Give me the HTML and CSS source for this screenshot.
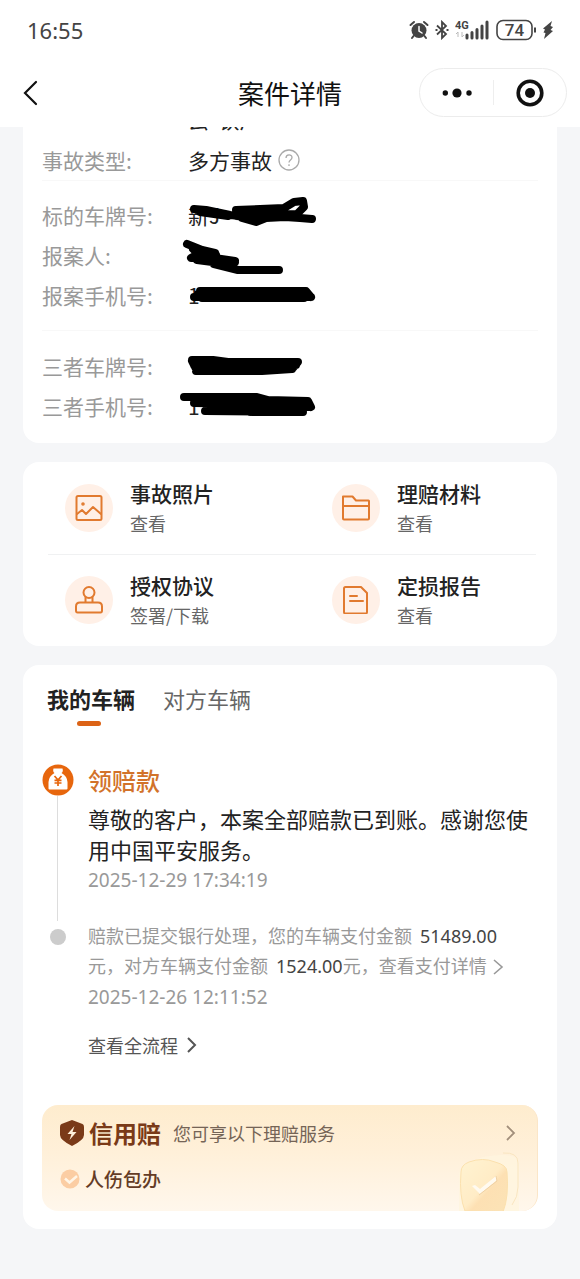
FILE: index.html
```html
<!DOCTYPE html>
<html lang="zh-CN">
<head>
<meta charset="utf-8">
<meta name="viewport" content="width=device-width, initial-scale=1">
<title>案件详情</title>
<link rel="stylesheet" href="styles.css">
</head>
<body>
<header class="header">
  <div class="status">
    <time class="clock">16:55</time>
    <div class="status-icons">
      <svg width="20" height="20" viewBox="0 0 20 20" fill="none" stroke="#444" stroke-width="2" stroke-linecap="round"><circle cx="10" cy="10.500" r="7.500" fill="#444" stroke="none"/><path d="M1.500 5 5 2M18.500 5 15 2M4.500 16 3 18M15.500 16 17 18"/><path d="M10 6.500v4.500l3 2" stroke="#fff" stroke-width="1.500"/></svg>
      <svg width="14" height="20" viewBox="0 0 14 20" fill="none" stroke="#444" stroke-width="1.800"><path d="M2 5.500 11 14 7 18V2l4 4-9 8.500"/><path d="M.500 10h2M11.500 10h2"/></svg>
      <svg class="signal" width="35" height="20" viewBox="0 0 35 20"><text x="0" y="9" class="signal-text">4G</text><path d="M3 12v5M1 14l2-2M7 12v5l2-2" stroke="#bbb" fill="none"/><path d="M12 15v3M17 12.500V18M22 9.500V18M27 6V18M32 2V18" stroke="#444" stroke-width="3" stroke-linecap="round"/></svg>
      <svg width="41" height="22" viewBox="0 0 41 22"><rect x="1" y="1.500" width="35" height="19" rx="6" fill="none" stroke="#444" stroke-width="1.600"/><path d="M39 8.500v5" stroke="#444" stroke-width="2"/><text x="18.500" y="17" text-anchor="middle" class="battery-text">74</text></svg>
      <svg width="10" height="20" viewBox="0 0 10 20" fill="#444"><path d="M9 1 0 8.500l2 1-1.500 3 2 .500L1 19l9-8-2.500-1L10 7 7.500 6z"/></svg>
    </div>
  </div>
  <div class="nav">
    <button class="icon-btn back" aria-label="返回"><svg width="16" height="26" viewBox="0 0 16 26" fill="none" stroke="#111" stroke-width="2.200" stroke-linecap="round"><path d="M14 2 3 13l11 11"/></svg></button>
    <h1 class="title">案件详情</h1>
    <div class="capsule">
      <button class="icon-btn" aria-label="更多"><svg width="30" height="12" viewBox="0 0 30 12" fill="#111"><circle cx="3.300" cy="6" r="2.700"/><circle cx="15" cy="6" r="4.600"/><circle cx="27" cy="6" r="2.700"/></svg></button>
      <button class="icon-btn" aria-label="关闭"><svg width="28" height="28" viewBox="0 0 28 28"><circle cx="14" cy="14" r="11.800" fill="none" stroke="#111" stroke-width="3.600"/><circle cx="14" cy="14" r="5" fill="#111"/></svg></button>
    </div>
  </div>
</header>

<main class="page">
  <section class="card details">
    <div class="cut-row"><span>云&nbsp; 铁厂</span></div>
    <dl class="group">
      <div class="row"><dt>事故类型:</dt><dd>多方事故<svg class="help" width="22" height="22" viewBox="0 0 22 22" fill="none" stroke="#aaa" stroke-width="1.300"><circle cx="11" cy="11" r="10"/><path d="M8 9c0-4 6-4 6-.5 0 2.500-3 2.500-3 5M11 15.300v1.700"/></svg></dd></div>
    </dl>
    <dl class="group">
      <div class="row"><dt>标的车牌号:</dt><dd>新J<svg class="ink" viewBox="180 196 140 40"><path d="M194 210 206 211 230 216 240 217M200 213 228 217M236 211 284 209 294 203 303 202 304 208 297 215 268 216M236 215 262 214 280 212M236 217 252 218 270 216 290 217M242 219 256 223 266 219 285 218 300 219 312 220"/></svg></dd></div>
      <div class="row"><dt>报案人:</dt><dd><svg class="ink" viewBox="180 236 140 40"><path d="M187 245 202 251 215 254M193 250 198 255 191 259 208 258 235 262 220 260M197 261 220 264 235 263M214 265 238 271H279M202 254 216 256 210 260"/></svg></dd></div>
      <div class="row"><dt>报案手机号:</dt><dd>1<svg class="ink" viewBox="180 276 140 40"><path d="M200 292H306L311 298M194 298H311M198 295H306M202 299H304"/></svg></dd></div>
    </dl>
    <dl class="group last">
      <div class="row"><dt>三者车牌号:</dt><dd><svg class="ink" viewBox="180 347 140 40"><path d="M192 361 213 361 228 363 298 363 293 369 196 372M194 366H296M192 362 197 372H262L292 370"/></svg></dd></div>
      <div class="row"><dt>三者手机号:</dt><dd>1<svg class="ink" viewBox="180 387 140 40"><path d="M184 398H257L268 401 308 402 311 408M194 404 308 406M205 412 303 413M198 401 220 403M210 408H309M250 413H294"/></svg></dd></div>
    </dl>
  </section>

  <nav class="card tiles">
    <div class="tile-row">
      <a class="tile" href="#photos"><span class="badge"><svg class="line-icon" viewBox="0 0 28 28"><rect x="1.500" y="2" width="25" height="24" rx="1.500"/><path d="M2 20 7 16 11 20 18 13 26 20"/><circle cx="8" cy="10" r=".800"/></svg></span><span class="tile-text"><b>事故照片</b><small>查看</small></span></a>
      <a class="tile" href="#materials"><span class="badge"><svg class="line-icon" viewBox="0 0 28 28"><path d="M1 2.500h9.500l3.500 4h12.500q.500 0 .500.500v17.500q0 1-1 1H2q-1 0-1-1zM1 12h26"/></svg></span><span class="tile-text"><b>理赔材料</b><small>查看</small></span></a>
    </div>
    <div class="tile-row">
      <a class="tile" href="#agreement"><span class="badge"><svg class="line-icon" viewBox="0 0 28 28"><circle cx="14" cy="6.500" r="5.500"/><path d="M10.500 11.500v5H5q-4 0-4 4v4Q1 26.500 2.500 26.500h23Q27 26.500 27 24.500v-4q0-4-4-4h-5.500v-5M10.500 16.500h7"/></svg></span><span class="tile-text"><b>授权协议</b><small>签署/下载</small></span></a>
      <a class="tile" href="#report"><span class="badge"><svg class="line-icon" viewBox="0 0 28 28"><path d="M3.500 1h15.500l6 6v19q0 1.500-1.500 1.500h-20Q2 27.500 2 26V2.500Q2 1 3.500 1zM8 10h7M8 15h13"/></svg></span><span class="tile-text"><b>定损报告</b><small>查看</small></span></a>
    </div>
  </nav>

  <section class="card progress">
    <div class="tabs" role="tablist">
      <button class="tab active" role="tab" aria-selected="true">我的车辆</button>
      <button class="tab" role="tab" aria-selected="false">对方车辆</button>
    </div>
    <ol class="steps">
      <li class="step">
        <div class="rail"><svg width="32" height="32" viewBox="0 0 32 32"><circle cx="16" cy="16" r="15.500" fill="#e7660d"/><path d="M11.500 4.500q-1 3 1 4.500Q7 12 6.500 18v6.500q0 1 1 1h17q1 0 1-1V18Q25 12 19.500 9q2-1.500 1-4.500z" fill="#fff"/><path d="m12.500 12 3.500 4 3.500-4M12.500 16.300h7M12.500 19h7M16 16v6" fill="none" stroke="#e7660d" stroke-width="1.700"/></svg><span class="line"></span></div>
        <div class="step-body current">
          <h2>领赔款</h2>
          <p class="message">尊敬的客户，本案全部赔款已到账。感谢您使用中国平安服务。</p>
          <time>2025-12-29 17:34:19</time>
        </div>
      </li>
      <li class="step">
        <div class="rail"><span class="dot"></span></div>
        <div class="step-body">
          <p class="past">赔款已提交银行处理，您的车辆支付金额 <strong>51489.00</strong> <br>元，对方车辆支付金额 <strong>1524.00</strong>元，<a href="#payment">查看支付详情<svg width="12" height="16" viewBox="0 0 12 16" fill="none" stroke="#999" stroke-width="1.600"><path d="m2 1 8 7-8 7"/></svg></a></p>
          <time>2025-12-26 12:11:52</time>
          <a class="all" href="#flow">查看全流程<svg width="12" height="16" viewBox="0 0 12 16" fill="none" stroke="#555" stroke-width="2"><path d="m2 1 7 7-7 7"/></svg></a>
        </div>
      </li>
    </ol>
    <a class="banner" href="#credit">
      <svg class="medal" width="82" height="62" viewBox="0 0 82 62" aria-hidden="true">
        <defs><linearGradient id="m" x1="0" y1="0" x2="1" y2="1"><stop offset="0" stop-color="#fff3d2"/><stop offset=".5" stop-color="#ffecc6"/><stop offset=".6" stop-color="#fde0b3"/><stop offset="1" stop-color="#fbe3b6"/></linearGradient></defs>
        <path d="M4 62V24Q6 16 28 8q34-6 36 6v48z" fill="#fff5df" opacity=".8"/>
        <path d="M48 4q15-1 15 10v24q0 10-6 18" fill="none" stroke="#f9e5c0"/>
        <path d="M10 62Q4 47 6 23q0-7 8-10 14-5 26 0 12 3 12 10 2 25-4 40z" fill="url(#m)" stroke="#fbe0ad"/>
        <path d="m17 37 8 8 17-14-1-4-16 13-5-4z" fill="#fffaf0"/><path d="m24 46 18-14-1-5" fill="none" stroke="#efd1a4"/>
      </svg>
      <span class="banner-head">
        <svg width="24" height="26" viewBox="0 0 24 26"><path d="M12 0 22.500 4Q24 4.500 24 7v8q0 5-12 11Q0 20 0 15V7q0-2.500 1.500-3z" fill="#7a3a18"/><path d="m14.500 6-7 8h4l-2 6 7-8h-4z" fill="#fff0da"/></svg>
        <b>信用赔</b><span class="banner-note">您可享以下理赔服务</span>
        <svg class="go" width="12" height="16" viewBox="0 0 12 16" fill="none" stroke="#a28f7b" stroke-width="1.800"><path d="m2 1 7 7-7 7"/></svg>
      </span>
      <span class="benefit"><svg width="20" height="20" viewBox="0 0 20 20"><circle cx="10" cy="10" r="9.500" fill="#fbcda3"/><path d="m5 9.500 4.500 4L17 7" fill="none" stroke="#fff5e6" stroke-width="2.500"/></svg>人伤包办</span>
    </a>
  </section>
</main>
</body>
</html>
```

FILE: styles.css
```css
* { box-sizing: border-box; }
body {
  margin: 0;
  background: #f5f6f8;
  color: #222;
  font-family: "Noto Sans CJK SC", sans-serif;
  font-size: 21px;
}
h1, h2, p, dl, dd, ol { margin: 0; padding: 0; }
ol { list-style: none; }
a { color: inherit; text-decoration: none; }
button { font: inherit; color: inherit; background: none; border: 0; padding: 0; }
svg { display: block; flex: none; }

.header { background: #fff; }
.status {
  height: 60px;
  padding: 0 27px;
  display: flex;
  align-items: center;
  justify-content: space-between;
}
.clock { font: 22px/30px "Noto Sans", sans-serif; color: #444; }
.status-icons { display: flex; align-items: center; gap: 6px; }
.signal-text { font: bold 11px Roboto, sans-serif; fill: #444; }
.battery-text { font: 500 17px Roboto, sans-serif; fill: #444; }
.nav {
  height: 67px;
  padding: 0 13px 2px;
  display: grid;
  grid-template-columns: 1fr auto 1fr;
  align-items: center;
}
.icon-btn { display: flex; align-items: center; justify-content: center; }
.back { justify-self: start; padding: 0 9px; }
.title { font-size: 26px; font-weight: 400; line-height: 36px; color: #111; }
.capsule {
  justify-self: end;
  width: 148px;
  height: 49px;
  border: 1px solid #ececec;
  border-radius: 25px;
  display: grid;
  grid-template-columns: 1fr 1fr;
  align-items: center;
}
.capsule .icon-btn { height: 25px; }
.capsule .icon-btn + .icon-btn { border-left: 1px solid #eee; }

.page { padding: 0 23px 50px; display: grid; gap: 19px; }
.card { background: #fff; border-radius: 16px; min-width: 0; }

.details { padding: 0 19px 17px; border-radius: 0 0 16px 16px; }
.cut-row {
  height: 5px;
  margin-bottom: 8px;
  padding-left: 146px;
  display: flex;
  align-items: flex-end;
  overflow: hidden;
  line-height: 26px;
}
.group { padding-bottom: 15px; margin-bottom: 15px; border-bottom: 1px solid #f8f8f8; }
.group:first-of-type { padding-bottom: 0; margin-bottom: 14px; }
.group.last { border: 0; margin: 0; padding: 0; }
.row { display: flex; align-items: center; height: 40px; line-height: 30px; }
.row dt { width: 146px; color: #999; }
.row dd { position: relative; display: flex; align-items: center; height: 40px; color: #222; }
.help { margin-left: 6px; }
.ink {
  position: absolute;
  left: -8px;
  top: 0;
  width: 140px;
  height: 40px;
  overflow: visible;
  fill: none;
  stroke: #000;
  stroke-width: 8;
  stroke-linecap: round;
  stroke-linejoin: round;
}

.tile-row { display: grid; grid-template-columns: 1fr 1fr; position: relative; }
.tile-row + .tile-row::before {
  content: "";
  position: absolute;
  left: 25px;
  right: 21px;
  top: 0;
  border-top: 1px solid #f0f1f2;
}
.tile { height: 92px; padding-left: 42px; display: flex; align-items: center; gap: 17px; }
.badge {
  width: 48px;
  height: 48px;
  border-radius: 50%;
  background: #fff0e7;
  display: flex;
  align-items: center;
  justify-content: center;
}
.line-icon {
  width: 28px;
  height: 28px;
  fill: none;
  stroke: #e17a2f;
  stroke-width: 2;
  stroke-linejoin: round;
  stroke-linecap: round;
}
.tile-text { display: grid; padding-bottom: 3px; }
.tile-text b { font-weight: 500; line-height: 32px; }
.tile-text small { font-size: 18px; line-height: 28px; color: #666; }

.progress { padding: 15px 19px 18px; }
.tabs { display: flex; gap: 28px; padding-left: 5px; }
.tab { position: relative; height: 46px; padding-bottom: 10px; font-size: 22px; line-height: 36px; color: #666; }
.tab.active { font-weight: 700; color: #222; }
.tab.active::after {
  content: "";
  position: absolute;
  left: 50%;
  bottom: 0;
  width: 24px;
  height: 5px;
  margin-left: -14px;
  border-radius: 3px;
  background: #dc6316;
}
.steps { padding-top: 38px; }
.step { display: flex; gap: 15px; }
.rail { width: 31px; display: flex; flex-direction: column; align-items: center; }
.line { flex: 1; width: 1px; background: #ddd; }
.dot { width: 16px; height: 16px; margin-top: 8px; border-radius: 50%; background: #ccc; }
.step-body { flex: 1; min-width: 0; }
.current { padding-bottom: 29px; }
.step h2 { font-size: 24px; font-weight: 500; line-height: 32px; color: #d2722a; padding-bottom: 7px; }
.message { font-size: 22px; line-height: 31px; margin-right: -10px; padding-bottom: 3px; }
.step time { display: block; font: 19px/24px "Noto Sans", sans-serif; color: #999; }
.past { font-size: 18px; line-height: 29px; color: #999; padding-bottom: 4px; }
.past strong { margin-left: 4px; font-family: "Noto Sans", sans-serif; font-weight: 400; color: #444; }
.past svg { display: inline-block; margin-left: 5px; vertical-align: -2px; }
.all { display: inline-flex; align-items: center; gap: 8px; margin-top: 22px; font-size: 18px; line-height: 28px; color: #555; }

.banner {
  position: relative;
  display: grid;
  margin-top: 46px;
  padding: 10px 20px 14px 18px;
  gap: 10px;
  border-radius: 16px;
  overflow: hidden;
  background: linear-gradient(to top, #fff7ec, #fff0d9 55%, #feecce);
  border-right: 1px solid #fbe6c8;
}
.medal { position: absolute; right: 0; bottom: 0; }
.banner-head { display: flex; align-items: center; line-height: 36px; color: #7a3a18; }
.banner-head b { font-size: 24px; margin: 0 12px 0 5px; }
.banner-note { font-size: 18px; color: #756456; }
.go { margin-left: auto; }
.benefit { position: relative; display: flex; align-items: center; gap: 5px; font-size: 19px; font-weight: 500; line-height: 36px; color: #643c26; }
```
